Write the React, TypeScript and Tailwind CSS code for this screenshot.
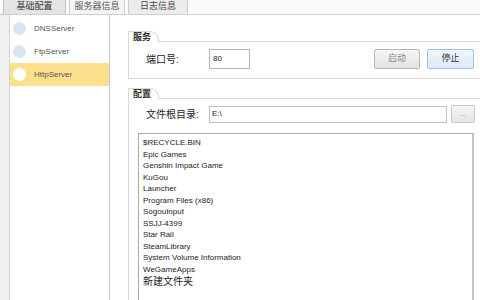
import React from "react";

const files = [
  "$RECYCLE.BIN",
  "Epic Games",
  "Genshin Impact Game",
  "KuGou",
  "Launcher",
  "Program Files (x86)",
  "SogouInput",
  "SSJJ-4399",
  "Star Rail",
  "SteamLibrary",
  "System Volume Information",
  "WeGameApps",
];

const servers = ["DNSServer", "FtpServer", "HttpServer"];

function GroupHeader({ title }: { title: string }) {
  return (
    <div className="flex h-[11px]">
      <div className="w-[30px] h-[11px] border-t border-r border-[#d8d8d8] rounded-tr-[9px] pl-[4px] text-[9px] leading-[11px] text-[#333] font-bold">
        {title}
      </div>
      <div className="flex-1 border-b border-[#d8d8d8]" />
    </div>
  );
}

export default function App() {
  return (
    <div
      className="w-[480px] h-[300px] overflow-hidden bg-white flex flex-col"
      style={{ fontFamily: '"Liberation Sans", "Noto Sans CJK SC", sans-serif' }}
    >
      <div className="h-[15px] flex items-end border-b border-[#cfcfcf] bg-[#fafafa] pl-[3px] gap-[3px]">
        <div className="w-[63px] h-[15px] bg-[#e4e4e4] border border-b-0 border-[#c4c4c4] flex items-center justify-center text-[9px] text-[#333]">
          基础配置
        </div>
        <div className="w-[56px] h-[15px] bg-[#f4f4f4] border border-b-0 border-[#cfcfcf] flex items-center justify-center text-[9px] text-[#555]">
          服务器信息
        </div>
        <div className="w-[60px] h-[15px] bg-[#ececec] border border-b-0 border-[#cfcfcf] flex items-center justify-center text-[9px] text-[#444]">
          日志信息
        </div>
      </div>
      <div className="flex flex-1">
        <div className="w-[10px] bg-[#f0f0f0] border-r border-[#d4d4d4]" />
        <div className="w-[100px] bg-white border-r border-[#c8c8c8] pt-[2px]">
          {servers.map((s, i) => (
            <div
              key={s}
              className={
                "h-[23px] flex items-center pl-[3px] gap-[8px] " +
                (i === 2 ? "bg-[#fde08d]" : "")
              }
            >
              <div
                className={
                  "w-[13px] h-[13px] rounded-full " +
                  (i === 2 ? "bg-white" : "bg-[#d9e6f2]")
                }
              />
              <span className="text-[8px] text-[#555]">{s}</span>
            </div>
          ))}
        </div>
        <div className="flex-1 pl-[18px] pt-[16px] flex flex-col">
          <div className="border-l border-b border-[#d8d8d8] h-[48px] flex flex-col">
            <GroupHeader title="服务" />
            <div className="flex items-center pt-[7px] pl-[17px]">
              <span className="text-[10px] text-[#222] w-[63px]">端口号:</span>
              <div className="w-[41px] h-[20px] border border-[#b5b5b5] bg-white flex items-center pl-[3px] text-[8px] text-[#222]">
                80
              </div>
              <div className="w-[124px]" />
              <div className="w-[46px] h-[20px] border border-[#b8b8b8] bg-gradient-to-b from-[#f6f6f6] to-[#e2e2e2] rounded-[2px] flex items-center justify-center text-[9px] text-[#888]">
                启动
              </div>
              <div className="w-[7px]" />
              <div className="w-[47px] h-[20px] border border-[#9cc2e8] bg-gradient-to-b from-[#f0f6fc] to-[#dde9f6] rounded-[2px] flex items-center justify-center text-[9px] text-[#333]">
                停止
              </div>
            </div>
          </div>
          <div className="mt-[9px] border-l border-[#d8d8d8] flex-1 flex flex-col">
            <GroupHeader title="配置" />
            <div className="flex items-center pt-[6px] pl-[17px]">
              <span className="text-[10px] text-[#222] w-[63px]">文件根目录:</span>
              <div className="w-[238px] h-[17px] border border-[#c4c4c4] bg-white flex items-center pl-[2px] text-[8px] text-[#222]">
                E:\
              </div>
              <div className="w-[4px]" />
              <div className="w-[24px] h-[18px] border border-[#c8c8c8] bg-gradient-to-b from-[#f6f6f6] to-[#e4e4e4] rounded-[2px] flex items-center justify-center text-[8px] text-[#999]">
                ...
              </div>
            </div>
            <div className="ml-[9px] mt-[10px] w-[336px] flex-1 border-l border-t border-[#aaaaaa] border-r-2 border-r-[#c4c4c4] bg-white pt-[3px] pl-[4px]">
              {files.map((f) => (
                <div key={f} className="text-[8px] h-[11.5px] leading-[11.5px] text-[#222] whitespace-nowrap">
                  {f}
                </div>
              ))}
              <div className="text-[10px] h-[11.5px] leading-[13px] text-[#222] whitespace-nowrap">
                新建文件夹
              </div>
            </div>
          </div>
        </div>
      </div>
    </div>
  );
}
